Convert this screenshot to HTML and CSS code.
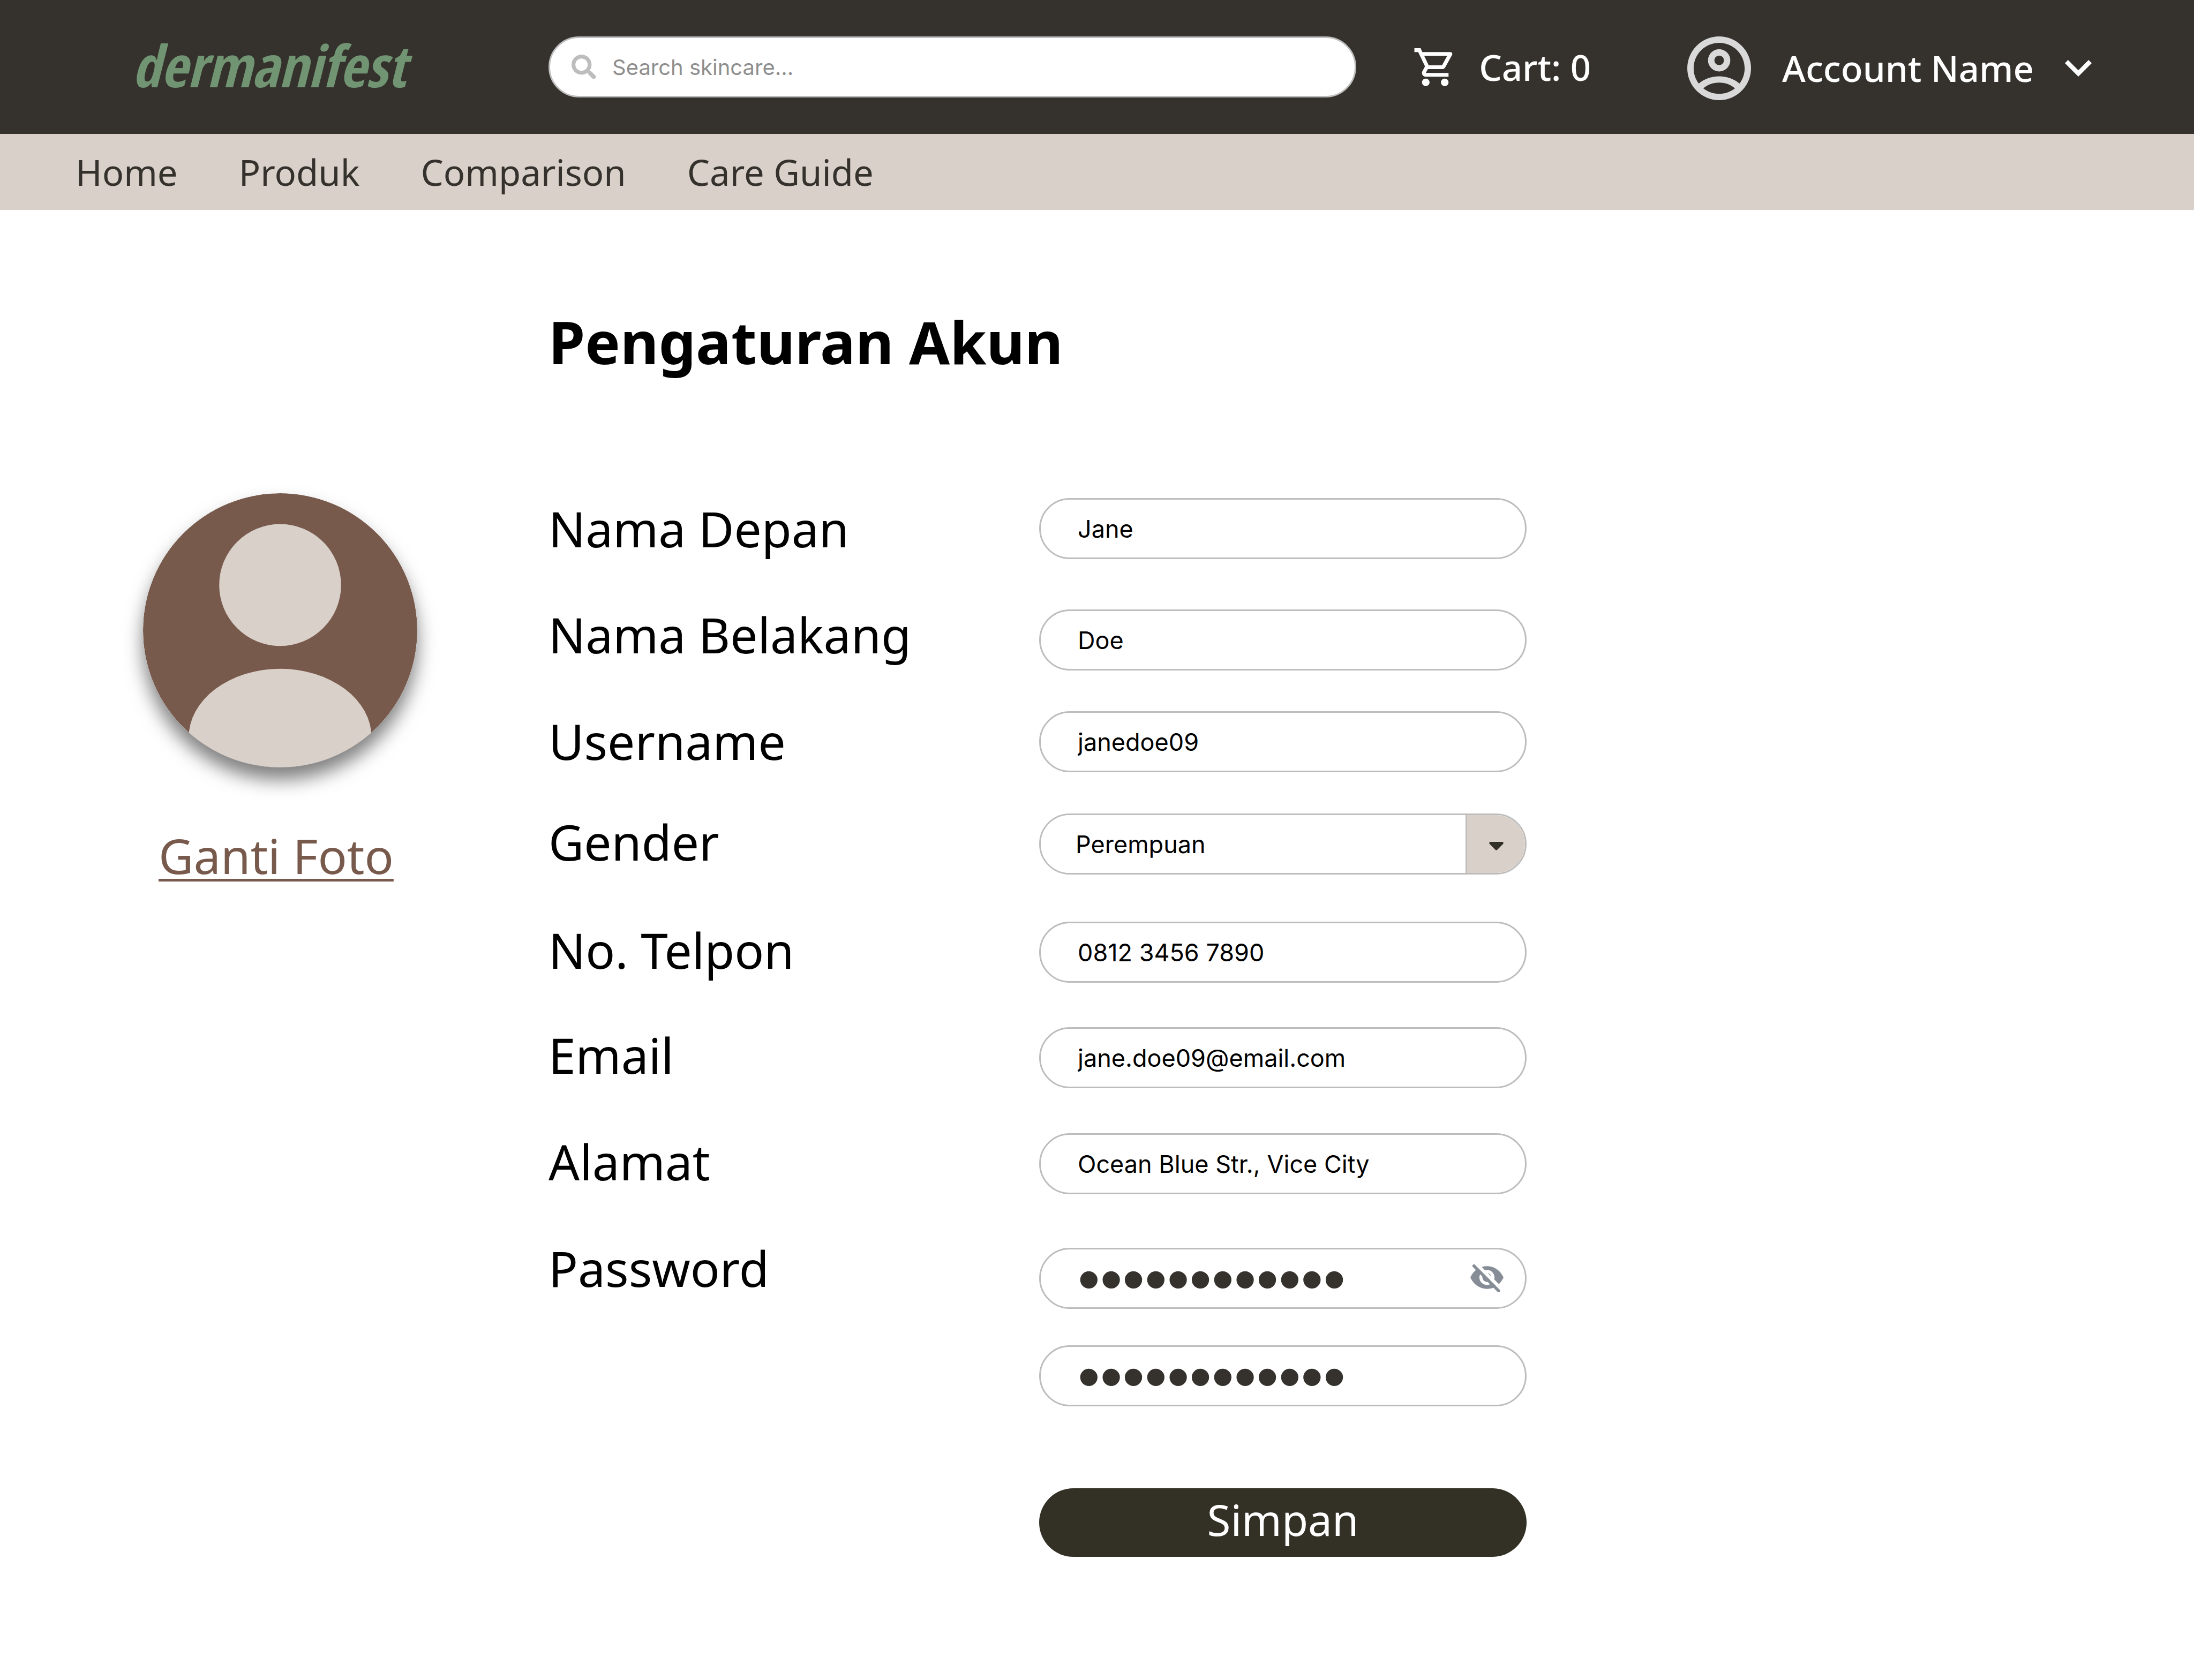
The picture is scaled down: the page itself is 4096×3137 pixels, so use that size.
FILE: index.html
```
<!DOCTYPE html>
<html lang="id">
<head>
<meta charset="utf-8">
<meta name="viewport" content="width=device-width, initial-scale=1">
<title>Pengaturan Akun – Dermanifest</title>
<link rel="stylesheet" href="styles.css">
</head>
<body>
<header class="topbar">
  <a class="logo" href="#">dermanifest</a>
  <form class="search" role="search">
    <svg class="search-icon" viewBox="0 0 512 512" aria-hidden="true"><path d="M505 442.7L405.3 343c-4.5-4.5-10.6-7-17-7H372c27.6-35.3 44-79.7 44-128C416 93.1 322.9 0 208 0S0 93.1 0 208s93.1 208 208 208c48.3 0 92.7-16.4 128-44v16.3c0 6.4 2.5 12.5 7 17l99.7 99.7c9.4 9.4 24.6 9.4 33.9 0l28.3-28.3c9.4-9.4 9.4-24.6.1-34zM208 336c-70.7 0-128-57.2-128-128 0-70.7 57.2-128 128-128 70.7 0 128 57.2 128 128 0 70.7-57.2 128-128 128z"/></svg>
    <input class="search-input" type="search" placeholder="Search skincare..." aria-label="Search skincare">
  </form>
  <a class="cart" href="#">
    <svg class="cart-icon" viewBox="0 0 24 24" aria-hidden="true"><path d="M15.55 13c.75 0 1.41-.41 1.75-1.03l3.58-6.49c.37-.66-.11-1.48-.87-1.48H5.21l-.94-2H1v2h2l3.6 7.59-1.35 2.44C4.52 15.37 5.48 17 7 17h12v-2H7l1.1-2h7.45zM6.16 6h12.15l-2.76 5H8.53L6.16 6zM7 18c-1.1 0-1.99.9-1.99 2S5.9 22 7 22s2-.9 2-2-.9-2-2-2zm10 0c-1.1 0-1.99.9-1.99 2s.89 2 1.99 2 2-.9 2-2-.9-2-2-2z"/></svg>
    <span>Cart: 0</span>
  </a>
  <button class="account" type="button">
    <svg class="account-icon" viewBox="2 2 20 20" aria-hidden="true"><path fill-rule="evenodd" d="M12 2a10 10 0 1 0 0 20a10 10 0 1 0 0-20zM7.04 18.3C8.3 17.15 10.1 16.5 12 16.5s3.7.65 4.96 1.8C15.6 19.4 13.9 20 12 20s-3.6-.6-4.96-1.7zM18.4 16.8C16.7 15.3 14.4 14.5 12 14.5s-4.7.8-6.4 2.3C4.6 15.5 4 13.8 4 12c0-4.42 3.58-8 8-8s8 3.58 8 8c0 1.8-.6 3.5-1.6 4.8zM12 6a3.5 3.5 0 1 0 0 7a3.5 3.5 0 1 0 0-7zM12 8a1.5 1.5 0 1 1 0 3a1.5 1.5 0 1 1 0-3z"/></svg>
    <span>Account Name</span>
    <svg class="chevron" viewBox="6 8.59 12 7.41" aria-hidden="true"><path d="M7.41 8.59L12 13.17l4.59-4.58L18 10l-6 6-6-6z"/></svg>
  </button>
</header>
<nav class="mainnav">
  <a href="#">Home</a>
  <a href="#">Produk</a>
  <a href="#">Comparison</a>
  <a href="#">Care Guide</a>
</nav>
<main class="settings">
  <h1 class="title">Pengaturan Akun</h1>
  <aside class="profile">
    <svg class="avatar" viewBox="0 0 720 720" role="img" aria-label="Foto profil">
      <defs><clipPath id="disc"><circle cx="360" cy="360" r="360"/></clipPath></defs>
      <g clip-path="url(#disc)">
        <rect width="720" height="720" fill="#785a4d"/>
        <circle cx="360" cy="241" r="160" fill="#d9d0c9"/>
        <ellipse cx="360" cy="641" rx="240" ry="180" fill="#d9d0c9"/>
      </g>
    </svg>
    <a class="change-photo" href="#">Ganti Foto</a>
  </aside>
  <form class="account-form">
    <div class="labels">
      <label for="first">Nama Depan</label>
      <label for="last">Nama Belakang</label>
      <label for="user">Username</label>
      <label for="gender">Gender</label>
      <label for="phone">No. Telpon</label>
      <label for="email">Email</label>
      <label for="address">Alamat</label>
      <label for="pass">Password</label>
    </div>
    <div class="fields">
      <input class="field" id="first" type="text" value="Jane">
      <input class="field" id="last" type="text" value="Doe">
      <input class="field" id="user" type="text" value="janedoe09">
      <div class="select">
        <select id="gender"><option>Perempuan</option><option>Laki-laki</option></select>
        <span class="select-arrow"><svg viewBox="0 0 27 16" aria-hidden="true"><path d="M2 0H25Q28 1 26 4L15 15Q13.500 16.500 12 15L1 4Q-1 1 2 0z"/></svg></span>
      </div>
      <input class="field" id="phone" type="tel" value="0812 3456 7890">
      <input class="field" id="email" type="email" value="jane.doe09@email.com">
      <input class="field" id="address" type="text" value="Ocean Blue Str., Vice City">
      <div class="secret">
        <input class="field dots" id="pass" type="password" value="dermanifest1">
        <button class="reveal" type="button" aria-label="Tampilkan password">
          <svg viewBox="240 237 264 222" aria-hidden="true">
            <path fill="#868d96" d="M240 341C263 285 315 251 372 251S480 286 504 341C480 397 429 432 372 432S263 397 240 341z"/>
            <circle cx="372" cy="341" r="60" fill="#fff"/>
            <circle cx="372" cy="341" r="36" fill="#868d96"/>
            <path d="M290 236L490 436" stroke="#fff" stroke-width="27"/>
            <path d="M268 249L465 447" stroke="#868d96" stroke-width="24" stroke-linecap="round"/>
          </svg>
        </button>
      </div>
      <input class="field dots" id="pass2" type="password" value="dermanifest1" aria-label="Ulangi password">
      <button class="save" type="submit">Simpan</button>
    </div>
  </form>
</main>
</body>
</html>
```
FILE: styles.css
```
* {
  box-sizing: border-box;
}

body {
  margin: 0;
  background: #fff;
  color: #000;
  font-family: "Noto Sans", "Open Sans", sans-serif;
}

a {
  color: inherit;
  text-decoration: none;
}

button,
input,
select {
  margin: 0;
  font-family: inherit;
}

svg {
  display: block;
  flex: none;
}

/* Top bar */
.topbar {
  display: flex;
  align-items: center;
  min-height: 250px;
  padding-right: 191px;
  background: #35322d;
  color: #fff;
  font-size: 67px;
  font-weight: 500;
}

.logo {
  width: 25vw;
  flex: none;
  padding: 0 0 8px 246px;
  color: #719573;
  font: italic bold 108px "Open Sans Condensed", "Roboto Condensed", sans-serif;
}

.search {
  display: flex;
  flex: 1;
  align-items: center;
  gap: 30px;
  height: 114px;
  padding: 0 40px;
  border: 3px solid #bdbdbd;
  border-radius: 57px;
  background: #fff;
}

.search-icon {
  width: 46px;
  height: 46px;
  fill: #bdbdbd;
}

.search-input {
  flex: 1;
  min-width: 0;
  border: 0;
  padding: 0;
  outline: 0;
  background: none;
  font: 40px Inter, sans-serif;
}

.search-input::placeholder {
  color: #8e8e8e;
}

.cart {
  display: flex;
  align-items: center;
  gap: 39px;
  margin-left: 105px;
}

.cart-icon {
  width: 85px;
  height: 85px;
  fill: #fff;
}

.account {
  display: flex;
  align-items: center;
  gap: 58px;
  margin-left: 180px;
  padding: 4px 0 0;
  border: 0;
  background: none;
  color: inherit;
  font-size: inherit;
  font-weight: inherit;
}

.account-icon {
  width: 119px;
  height: 119px;
  fill: #d9d9d9;
}

.chevron {
  width: 50px;
  height: 31px;
  fill: #fff;
}

/* Main navigation */
.mainnav {
  display: flex;
  align-items: center;
  gap: 114px;
  min-height: 142px;
  padding: 0 141px;
  background: #d9d0c9;
  color: #35322d;
  font-size: 67px;
}

/* Account settings */
.settings {
  display: grid;
  grid-template-columns: 25% 1fr;
  row-gap: 224px;
  padding: 185px 0;
}

.title {
  grid-column: 2;
  margin: 0;
  font-size: 110px;
  font-weight: 700;
  line-height: 120px;
}

.profile {
  display: flex;
  flex-direction: column;
  gap: 107px;
  padding-left: 267px;
}

.avatar {
  width: 512px;
  height: 512px;
  border-radius: 50%;
  box-shadow: 0 23px 34px rgba(0, 0, 0, 0.5);
}

.change-photo {
  padding-left: 29px;
  color: #785a4d;
  font-size: 90px;
  line-height: 114px;
  text-decoration: underline;
  text-decoration-thickness: 5px;
  text-underline-offset: 9px;
  text-decoration-skip-ink: none;
}

/* Labels and controls keep separate row rhythms */
.account-form {
  display: grid;
  grid-template-columns: minmax(0, 916px) minmax(0, 910px);
  padding-top: 9px;
}

.labels {
  display: grid;
  grid-template-rows: 198px 199px 188px 202px 196px 199px 199px 114px;
  align-content: start;
  align-items: start;
  font-size: 91px;
  line-height: 114px;
}

.fields {
  display: grid;
  grid-template-rows: 208px 190px 191px 202px 197px 198px 214px 182px 267px;
  align-content: start;
  align-items: start;
}

.field {
  width: 100%;
  height: 114px;
  padding: 0 69px;
  border: 3px solid #bdbdbd;
  border-radius: 57px;
  background: #fff;
  color: #000;
  font: 45px Inter, sans-serif;
}

.select {
  display: grid;
  grid-template-columns: 1fr 111px;
  height: 114px;
  border: 3px solid #bdbdbd;
  border-radius: 57px;
  overflow: hidden;
}

.select select {
  grid-area: 1 / 1 / 2 / 3;
  appearance: none;
  padding: 0 65px;
  border: 0;
  background: #fff;
  color: #000;
  font: 45px Inter, sans-serif;
}

.select-arrow {
  display: grid;
  grid-area: 1 / 2;
  place-items: center;
  border-left: 3px solid #bdbdbd;
  padding-top: 8px;
  background: #d9d0c9;
  pointer-events: none;
}

.select-arrow svg {
  width: 27px;
  height: 16px;
  fill: #333026;
}

.secret {
  display: grid;
  grid-template-columns: 1fr 62px 43px;
  align-items: center;
}

.secret .field {
  grid-area: 1 / 1 / 2 / 4;
}

.reveal {
  grid-area: 1 / 2;
  padding: 0;
  border: 0;
  background: none;
}

.reveal svg {
  width: 62px;
  height: 52px;
}

.dots {
  color: #35322d;
  font: 119px "Liberation Sans", sans-serif;
}

.save {
  height: 128px;
  padding: 0 0 14px;
  border: 0;
  border-radius: 64px;
  background: #333026;
  color: #fff;
  font-size: 80px;
}
```
